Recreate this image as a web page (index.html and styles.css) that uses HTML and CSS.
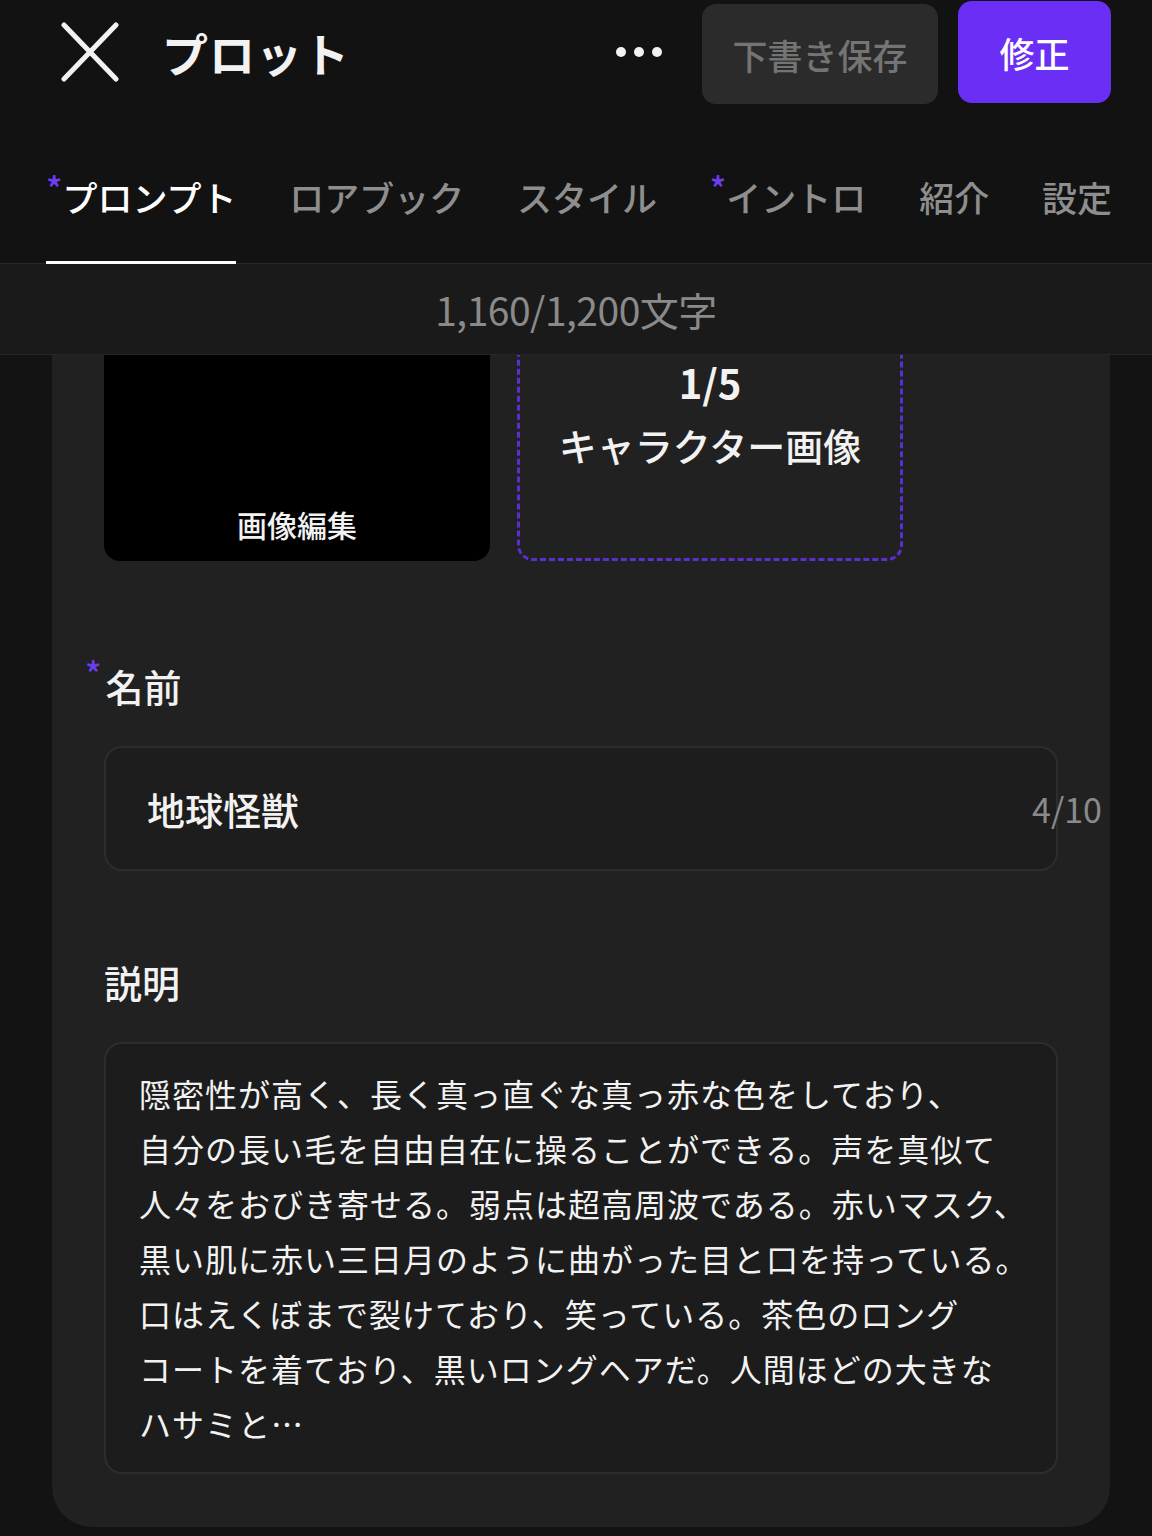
FILE: index.html
```html
<!DOCTYPE html>
<html lang="ja">
<head>
    <meta charset="UTF-8">
    <title>プロット</title>
    <link rel="stylesheet" href="styles.css">
</head>
<body>

    <div class="header">
        <div class="close">
            <svg width="60" height="60" viewBox="0 0 60 60">
                <path d="M4 3 L56 57 M56 3 L4 57" stroke="#f2f2f2" stroke-width="5" stroke-linecap="round" fill="none"/>
            </svg>
        </div>
        <div class="title">プロット</div>
        <div class="more"><span></span><span></span><span></span></div>
        <div class="btn btn-draft">下書き保存</div>
        <div class="btn btn-save">修正</div>
    </div>

    <ul class="tabs">
        <li class="active"><i>*</i>プロンプト</li>
        <li>ロアブック</li>
        <li>スタイル</li>
        <li><i>*</i>イントロ</li>
        <li>紹介</li>
        <li>設定</li>
    </ul>

    <div class="count-bar">1,160/1,200文字</div>

    <div class="main">
        <div class="card">
            <div class="tiles">
                <div class="tile tile-img">画像編集</div>
                <div class="tile tile-add">
                    <div class="num">1/5</div>
                    <div class="label">キャラクター画像</div>
                </div>
            </div>

            <div class="field-label"><i>*</i>名前</div>
            <div class="input">
                <span class="value">地球怪獣</span>
                <span class="limit">4/10</span>
            </div>

            <div class="field-label">説明</div>
            <div class="textarea">
                隠密性が高く、長く真っ直ぐな真っ赤な色をしており、<br>
                自分の長い毛を自由自在に操ることができる。声を真似て<br>
                人々をおびき寄せる。弱点は超高周波である。赤いマスク、<br>
                黒い肌に赤い三日月のように曲がった目と口を持っている。<br>
                口はえくぼまで裂けており、笑っている。茶色のロング<br>
                コートを着ており、黒いロングヘアだ。人間ほどの大きな<br>
                ハサミと…
            </div>
        </div>
    </div>

</body>
</html>
```

FILE: styles.css
```css
body,ul,li{ margin: 0; padding: 0; }
li{ list-style: none; }
i{ font-style: normal; }

body{
    width: 1152px;
    height: 1536px;
    overflow: hidden;
    background: #131313;
    color: #f2f2f2;
    font-family: "Noto Sans CJK JP", "Noto Sans", sans-serif;
}

/* 顶部栏 */
.header{
    height: 104px;
    display: flex;
    align-items: center;
    padding: 0 41px 0 60px;
    background: #121212;
}

.header .close{
    width: 60px;
    height: 60px;
    margin-right: 42px;
}

.header .close svg{ display: block; }

.header .title{
    font-size: 46px;
    font-weight: 700;
    letter-spacing: 1px;
    flex: 1;
}

.header .more{
    display: flex;
    gap: 8px;
    margin-right: 40px;
}

.header .more span{
    width: 10px;
    height: 10px;
    border-radius: 50%;
    background: #f2f2f2;
}

.header .btn{
    height: 100px;
    border-radius: 14px;
    display: flex;
    align-items: center;
    justify-content: center;
    font-size: 35px;
    font-weight: 500;
}

.header .btn-draft{
    width: 236px;
    background: #2b2b2b;
    color: #747474;
    margin-right: 20px;
    margin-top: 4px;
}

.header .btn-save{
    width: 153px;
    height: 102px;
    background: #6b2ef5;
    color: #fff;
}

/* 标签栏 */
.tabs{
    display: flex;
    justify-content: space-between;
    padding: 0 40px 0 46px;
    border-bottom: 1px solid #272727;
    background: #121212;
}

.tabs li{
    font-size: 35px;
    font-weight: 500;
    line-height: 48px;
    color: #8e8e8e;
    padding: 69px 0 40px;
    border-bottom: 3px solid transparent;
    margin-bottom: -1px;
}

.tabs li.active{
    color: #fff;
    border-bottom-color: #fff;
}

.tabs li i,
.field-label i{
    color: #6b3cf0;
    font-size: 34px;
    vertical-align: top;
    line-height: 1;
    position: relative;
    top: -2px;
}

/* 字数统计 */
.count-bar{
    height: 90px;
    display: flex;
    align-items: center;
    justify-content: center;
    background: #1a1a1a;
    border-bottom: 1px solid #262626;
    color: #8a8a8a;
    font-size: 39px;
    letter-spacing: -0.5px;
}

/* 内容区 */
.main{
    height: 1180px;
    overflow: hidden;
}

.card{
    margin: -180px 42px 0 52px;
    padding: 0 52px 53px;
    background: #212121;
    border-radius: 0 0 40px 40px;
}

.tiles{
    display: flex;
    gap: 27px;
}

.tile{
    width: 386px;
    height: 386px;
    border-radius: 16px;
    box-sizing: border-box;
}

.tile-img{
    background: #000;
    display: flex;
    align-items: flex-end;
    justify-content: center;
    padding-bottom: 17px;
    font-size: 30px;
    font-weight: 500;
    line-height: 40px;
}

.tile-add{
    border: 3px dashed #5a2fd0;
    display: flex;
    flex-direction: column;
    align-items: center;
    justify-content: flex-end;
    padding-bottom: 86px;
}

.tile-add .num{
    font-size: 40px;
    font-weight: 700;
    line-height: 46px;
}

.tile-add .label{
    font-size: 38px;
    font-weight: 500;
    line-height: 54px;
    margin-top: 13px;
}

.field-label{
    font-size: 38px;
    font-weight: 500;
    line-height: 52px;
    margin-top: 99px;
}

.field-label i{
    margin-left: -19px;
    margin-right: 4px;
    top: -4px;
}

.field-label + .input,
.field-label + .textarea{
    margin-top: 34px;
}

.input{
    height: 125px;
    box-sizing: border-box;
    border: 2px solid #2d2d2d;
    border-radius: 18px;
    background: #1d1d1d;
    display: flex;
    align-items: center;
    padding-left: 41px;
}

.input .value{
    flex: 1;
    font-size: 38px;
    font-weight: 500;
}

.input .limit{
    font-size: 34px;
    color: #8a8a8a;
    margin-right: -46px;
}

.input + .field-label{
    margin-top: 85px;
}

.textarea{
    height: 432px;
    box-sizing: border-box;
    border: 2px solid #2d2d2d;
    border-radius: 18px;
    background: #1c1c1c;
    padding: 22px 10px 0 33px;
    font-size: 32px;
    line-height: 55px;
    letter-spacing: 1px;
}
```
